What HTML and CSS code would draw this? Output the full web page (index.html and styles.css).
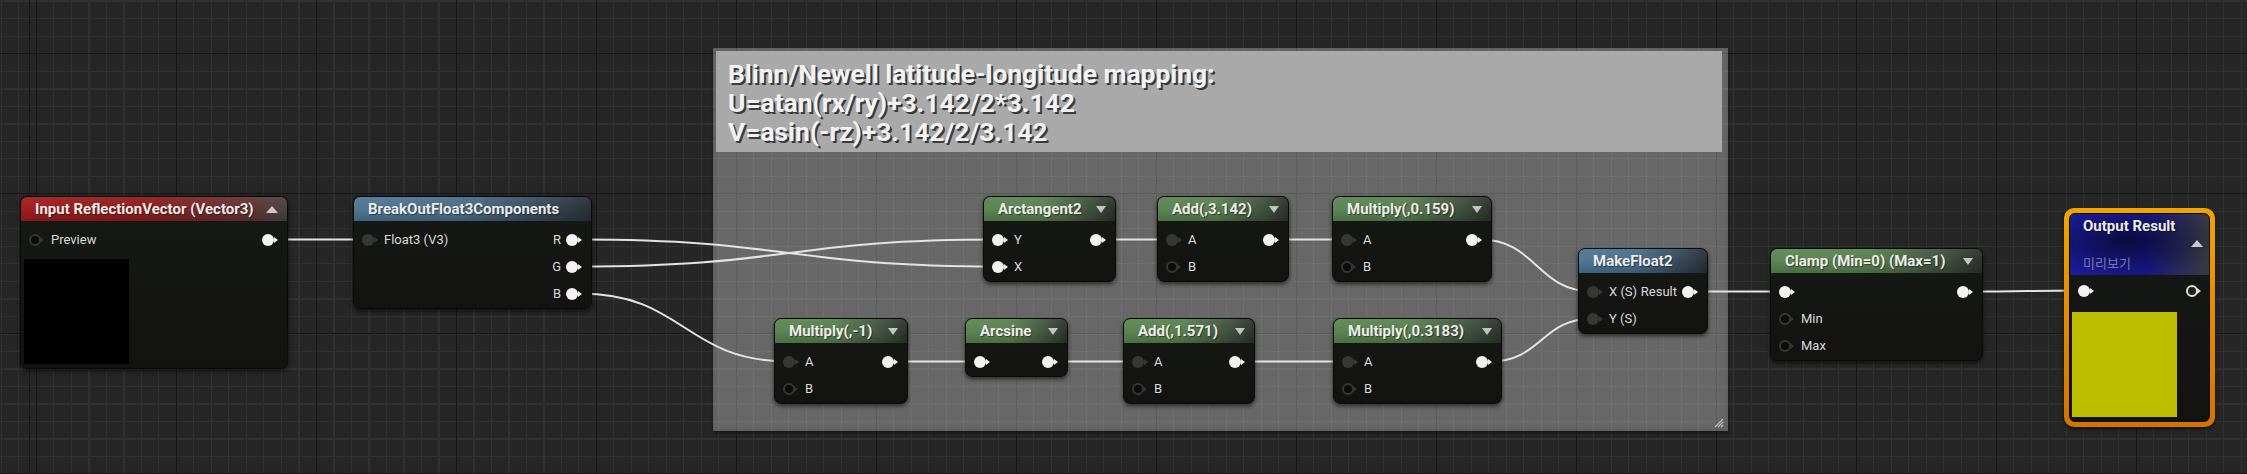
FILE: index.html
```html
<!DOCTYPE html>
<html lang="en">
<head>
<meta charset="utf-8">
<title>Material Graph</title>
<link rel="stylesheet" href="styles.css">
</head>
<body>
<div class="graph">
  <div class="comment">
    <div class="comment-hdr">
      <div>Blinn/Newell latitude-longitude mapping:</div>
      <div>U=atan(rx/ry)+3.142/2*3.142</div>
      <div>V=asin(-rz)+3.142/2/3.142</div>
    </div>
    <svg class="resize" width="12" height="12" viewBox="0 0 12 12">
      <path d="M11 3 L3 11 M11 6 L6 11 M11 9 L9 11" stroke="#b8b8b8" stroke-width="1.2"/>
    </svg>
  </div>

  <svg class="wires" width="2247" height="474" viewBox="0 0 2247 474">
    <g fill="none" stroke="#e4e4e4" stroke-width="2">
      <path d="M276 239.5 L368 239.5"/>
      <path d="M580 239.5 C789 239.5 789 266.5 998 266.5"/>
      <path d="M580 266.5 C789 266.5 789 239.5 998 239.5"/>
      <path d="M580 293.5 C684.5 293.5 684.5 361.5 789 361.5"/>
      <path d="M1104 239.5 L1172 239.5"/>
      <path d="M1277 239.5 L1347 239.5"/>
      <path d="M1480 239.5 C1536.5 239.5 1536.5 291.5 1593 291.5"/>
      <path d="M896 361.5 L980 361.5"/>
      <path d="M1056 361.5 L1138 361.5"/>
      <path d="M1243 361.5 L1348 361.5"/>
      <path d="M1490 361.5 C1541.5 361.5 1541.5 318.5 1593 318.5"/>
      <path d="M1696 291.5 L1785 291.5"/>
      <path d="M1971 291.5 C2027 291.5 2027 290.5 2084 290.5"/>
    </g>
  </svg>

  <div class="node n-input">
    <div class="hdr hdr-red"><span class="title">Input ReflectionVector (Vector3)</span><span class="tri-up"></span></div>
    <div class="body">
      <div class="row"><div class="side"><span class="pin ring"></span><span class="lbl">Preview</span></div><div class="side out"><span class="pin on"></span></div></div>
      <div class="preview black"></div>
    </div>
  </div>

  <div class="node n-break">
    <div class="hdr hdr-blue"><span class="title">BreakOutFloat3Components</span></div>
    <div class="body">
      <div class="row"><div class="side"><span class="pin dim"></span><span class="lbl">Float3 (V3)</span></div><div class="side out"><span class="lbl">R</span><span class="pin on"></span></div></div>
      <div class="row"><div class="side"></div><div class="side out"><span class="lbl">G</span><span class="pin on"></span></div></div>
      <div class="row"><div class="side"></div><div class="side out"><span class="lbl">B</span><span class="pin on"></span></div></div>
    </div>
  </div>

  <div class="node n-atan">
    <div class="hdr hdr-green"><span class="title">Arctangent2</span><span class="tri-down"></span></div>
    <div class="body">
      <div class="row"><div class="side"><span class="pin on"></span><span class="lbl">Y</span></div><div class="side out"><span class="pin on"></span></div></div>
      <div class="row"><div class="side"><span class="pin on"></span><span class="lbl">X</span></div><div class="side out"></div></div>
    </div>
  </div>

  <div class="node n-add1">
    <div class="hdr hdr-green"><span class="title">Add(,3.142)</span><span class="tri-down"></span></div>
    <div class="body">
      <div class="row"><div class="side"><span class="pin dim"></span><span class="lbl">A</span></div><div class="side out"><span class="pin on"></span></div></div>
      <div class="row"><div class="side"><span class="pin ring"></span><span class="lbl">B</span></div><div class="side out"></div></div>
    </div>
  </div>

  <div class="node n-mul1">
    <div class="hdr hdr-green"><span class="title">Multiply(,0.159)</span><span class="tri-down"></span></div>
    <div class="body">
      <div class="row"><div class="side"><span class="pin dim"></span><span class="lbl">A</span></div><div class="side out"><span class="pin on"></span></div></div>
      <div class="row"><div class="side"><span class="pin ring"></span><span class="lbl">B</span></div><div class="side out"></div></div>
    </div>
  </div>

  <div class="node n-mulneg">
    <div class="hdr hdr-green"><span class="title">Multiply(,-1)</span><span class="tri-down"></span></div>
    <div class="body">
      <div class="row"><div class="side"><span class="pin dim"></span><span class="lbl">A</span></div><div class="side out"><span class="pin on"></span></div></div>
      <div class="row"><div class="side"><span class="pin ring"></span><span class="lbl">B</span></div><div class="side out"></div></div>
    </div>
  </div>

  <div class="node n-asin">
    <div class="hdr hdr-green"><span class="title">Arcsine</span><span class="tri-down"></span></div>
    <div class="body">
      <div class="row"><div class="side"><span class="pin on"></span></div><div class="side out"><span class="pin on"></span></div></div>
    </div>
  </div>

  <div class="node n-add2">
    <div class="hdr hdr-green"><span class="title">Add(,1.571)</span><span class="tri-down"></span></div>
    <div class="body">
      <div class="row"><div class="side"><span class="pin dim"></span><span class="lbl">A</span></div><div class="side out"><span class="pin on"></span></div></div>
      <div class="row"><div class="side"><span class="pin ring"></span><span class="lbl">B</span></div><div class="side out"></div></div>
    </div>
  </div>

  <div class="node n-mul2">
    <div class="hdr hdr-green"><span class="title">Multiply(,0.3183)</span><span class="tri-down"></span></div>
    <div class="body">
      <div class="row"><div class="side"><span class="pin dim"></span><span class="lbl">A</span></div><div class="side out"><span class="pin on"></span></div></div>
      <div class="row"><div class="side"><span class="pin ring"></span><span class="lbl">B</span></div><div class="side out"></div></div>
    </div>
  </div>

  <div class="node n-make">
    <div class="hdr hdr-blue"><span class="title">MakeFloat2</span></div>
    <div class="body">
      <div class="row"><div class="side"><span class="pin dim"></span><span class="lbl">X (S)</span></div><div class="side out"><span class="lbl">Result</span><span class="pin on"></span></div></div>
      <div class="row"><div class="side"><span class="pin dim"></span><span class="lbl">Y (S)</span></div><div class="side out"></div></div>
    </div>
  </div>

  <div class="node n-clamp">
    <div class="hdr hdr-green"><span class="title">Clamp (Min=0) (Max=1)</span><span class="tri-down"></span></div>
    <div class="body">
      <div class="row"><div class="side"><span class="pin on"></span></div><div class="side out"><span class="pin on"></span></div></div>
      <div class="row"><div class="side"><span class="pin ring"></span><span class="lbl">Min</span></div><div class="side out"></div></div>
      <div class="row"><div class="side"><span class="pin ring"></span><span class="lbl">Max</span></div><div class="side out"></div></div>
    </div>
  </div>

  <div class="selected n-output">
    <div class="node-inner">
      <div class="out-hdr">
        <span class="title">Output Result</span>
        <span class="tri-up out-tri"></span>
        <span class="out-sub">미리보기</span>
      </div>
      <div class="body out-body">
        <div class="row"><div class="side"><span class="pin on"></span></div><div class="side out"><span class="pin ring-white"></span></div></div>
        <div class="preview yellow"></div>
      </div>
    </div>
  </div>
</div>
</body>
</html>
```

FILE: styles.css
```css
html, body {
  margin: 0;
  padding: 0;
  background: #262626;
}

.graph {
  position: relative;
  width: 2247px;
  height: 474px;
  overflow: hidden;
  background-color: #262626;
  background-image:
    repeating-linear-gradient(90deg, #171717 0 1px, transparent 1px 140px),
    repeating-linear-gradient(180deg, #171717 0 1px, transparent 1px 140px),
    repeating-linear-gradient(90deg, #313131 0 1px, transparent 1px 17.5px),
    repeating-linear-gradient(180deg, #313131 0 1px, transparent 1px 17.5px);
  background-position: 36px 0, 0 53px, 1px 0, 0 1px;
  font-family: Roboto, "Noto Sans", "Liberation Sans", sans-serif;
  color: #dcdcdc;
}

/* ---------- comment box ---------- */
.comment {
  position: absolute;
  left: 713px;
  top: 48px;
  width: 1015px;
  height: 383px;
  box-sizing: border-box;
  padding: 3px 6px 0 3px;
  background: rgba(255, 255, 255, 0.3);
  box-shadow: 0 2px 3px rgba(0, 0, 0, 0.45), inset 0 0 6px rgba(0, 0, 0, 0.12);
}

.comment-hdr {
  height: 101px;
  box-sizing: border-box;
  padding: 8px 12px 5px;
  background: #a9a9a9;
  color: #f2f2f2;
  font-weight: 700;
  font-size: 26.5px;
  line-height: 29px;
  letter-spacing: -0.05px;
  text-shadow: 2px 2px 0 #3a3a3a;
}

.resize {
  position: absolute;
  right: 4px;
  bottom: 3px;
}

/* ---------- wires ---------- */
.wires {
  position: absolute;
  left: 0;
  top: 0;
}

/* ---------- nodes ---------- */
.node, .node-inner {
  background: linear-gradient(180deg, #171916, #121311);
  border: 1px solid #0a0a0a;
  border-radius: 7px;
}

.node {
  position: absolute;
  box-sizing: border-box;
  box-shadow: 0 2px 4px rgba(0, 0, 0, 0.6);
}

.hdr {
  height: 24px;
  display: flex;
  align-items: center;
  justify-content: space-between;
  padding: 0 9px 0 14px;
  border-radius: 6px 6px 0 0;
}

.title {
  font-weight: 700;
  font-size: 15px;
  color: #ebebeb;
  white-space: nowrap;
  text-shadow: 1px 1px 1px rgba(0, 0, 0, 0.45);
}

.hdr-green {
  background:
    linear-gradient(180deg, rgba(255, 255, 255, 0.06), rgba(0, 0, 0, 0) 50%, rgba(0, 0, 0, 0.18)),
    linear-gradient(90deg, #5c8652 0%, #5a8150 45%, #415340 80%, #2e332d 100%);
}

.hdr-blue {
  background:
    linear-gradient(180deg, rgba(255, 255, 255, 0.06), rgba(0, 0, 0, 0) 50%, rgba(0, 0, 0, 0.18)),
    linear-gradient(90deg, #4f7796 0%, #4a6e8b 45%, #37495a 80%, #2b3035 100%);
}

.hdr-red {
  background:
    linear-gradient(180deg, rgba(255, 255, 255, 0.06), rgba(0, 0, 0, 0) 50%, rgba(0, 0, 0, 0.18)),
    linear-gradient(90deg, #a11d1d 0%, #921c1c 45%, #6a3030 80%, #4b4242 100%);
}

.tri-down {
  width: 0;
  height: 0;
  border-left: 5px solid transparent;
  border-right: 5px solid transparent;
  border-top: 7px solid #c4c4c4;
  flex: none;
}

.tri-up {
  width: 0;
  height: 0;
  border-left: 6px solid transparent;
  border-right: 6px solid transparent;
  border-bottom: 7px solid #c8c8c8;
  flex: none;
}

.body {
  padding: 5px 0 1px;
}

.row {
  height: 27px;
  display: flex;
  align-items: center;
  justify-content: space-between;
  padding: 0 10px 0 8px;
}

.side {
  display: flex;
  align-items: center;
  gap: 7px;
}

.side.out {
  gap: 5px;
}

.lbl {
  font-size: 13px;
  color: #dadada;
  white-space: nowrap;
}

/* pins */
.pin {
  position: relative;
  width: 12px;
  height: 12px;
  border-radius: 50%;
  box-sizing: border-box;
  margin-right: 3px;
  flex: none;
}

.pin::after {
  content: "";
  position: absolute;
  right: -4px;
  top: 3px;
  border-left: 4px solid currentColor;
  border-top: 3px solid transparent;
  border-bottom: 3px solid transparent;
}

.pin.on {
  background: #f2f2f2;
  color: #f2f2f2;
}

.pin.dim {
  background: #363736;
  color: #363736;
}

.pin.ring {
  background: #0b0b0b;
  border: 2px solid #353535;
  color: #353535;
}

.pin.ring::after,
.pin.ring-white::after {
  right: -5px;
  top: 1px;
}

.pin.ring-white {
  background: #202020;
  border: 2px solid #e0e0e0;
  color: #e0e0e0;
}

.preview {
  width: 105px;
  height: 105px;
}

.preview.black {
  background: #000;
  margin: 6px 0 3px 3px;
}

/* node placement on the canvas */
.n-input  { left: 20px;   top: 196px; width: 268px; }
.n-break  { left: 353px;  top: 196px; width: 239px; }
.n-atan   { left: 983px;  top: 196px; width: 133px; }
.n-add1   { left: 1157px; top: 196px; width: 132px; }
.n-mul1   { left: 1332px; top: 196px; width: 160px; }
.n-mulneg { left: 774px;  top: 318px; width: 134px; }
.n-asin   { left: 965px;  top: 318px; width: 103px; }
.n-add2   { left: 1123px; top: 318px; width: 132px; }
.n-mul2   { left: 1333px; top: 318px; width: 169px; }
.n-make   { left: 1578px; top: 248px; width: 130px; }
.n-clamp  { left: 1770px; top: 248px; width: 213px; }

/* selected output node */
.selected {
  position: absolute;
  left: 2064px;
  top: 208px;
  padding: 5px;
  border-radius: 10px;
  background: linear-gradient(180deg, #f0a500, #d67200);
  box-shadow: 0 2px 4px rgba(0, 0, 0, 0.6);
}

.node-inner {
  width: 139px;
  border-radius: 6px;
}

.out-hdr {
  height: 61px;
  box-sizing: border-box;
  padding: 3px 6px 0 13px;
  display: flex;
  flex-direction: column;
  border-radius: 5px 5px 0 0;
  background:
    radial-gradient(ellipse 70% 60% at 40% 45%, rgba(0, 0, 0, 0.55), rgba(0, 0, 0, 0) 100%),
    linear-gradient(90deg, #1c1c9e 0%, #18188a 55%, #2e2e55 85%, #3a3a40 100%);
}

.out-hdr .title {
  line-height: 18px;
}

.out-tri {
  align-self: flex-end;
  margin-top: 5px;
}

.out-sub {
  margin-top: 8px;
  font-family: "Noto Sans CJK KR", "Noto Sans", sans-serif;
  font-size: 13px;
  line-height: 16px;
  color: #7777a8;
}

.body.out-body {
  padding: 2px 0 4px;
}

.out-body .row {
  padding-right: 8px;
}

.preview.yellow {
  background: #bebe00;
  margin: 8px 0 0 2px;
}
```
